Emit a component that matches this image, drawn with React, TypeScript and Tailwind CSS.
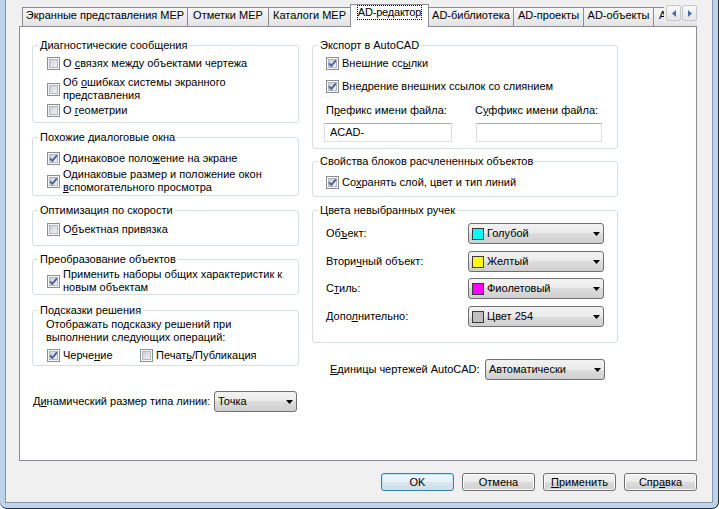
import React from 'react';

function U({ children }: { children: React.ReactNode }) {
  return <span className="underline underline-offset-[1px]">{children}</span>;
}

function CheckBox({ checked = false }: { checked?: boolean }) {
  return (
    <svg width="13" height="13" viewBox="0 0 13 13" className="shrink-0">
      <defs>
        <linearGradient id="cb-fill" x1="0" y1="0" x2="1" y2="1">
          <stop offset="0" stopColor="#c9cdd3" />
          <stop offset="1" stopColor="#f4f5f6" />
        </linearGradient>
      </defs>
      <rect x="0.5" y="0.5" width="12" height="12" fill="#f6f6f6" stroke="#8e8f8f" />
      <rect x="2.5" y="2.5" width="8" height="8" fill="url(#cb-fill)" stroke="#b3b8bf" />
      {checked && (
        <path d="M3.2 6.4 L5.3 9 L9.9 3.4" fill="none" stroke="#4a5f97" strokeWidth="1.9" strokeLinejoin="round" />
      )}
    </svg>
  );
}

function CheckRow({
  checked = false,
  className = '',
  children,
}: {
  checked?: boolean;
  className?: string;
  children: React.ReactNode;
}) {
  return (
    <div className={`flex items-center ${className}`}>
      <CheckBox checked={checked} />
      <span className="ml-[3px] whitespace-nowrap">{children}</span>
    </div>
  );
}

function Group({
  title,
  className = '',
  children,
}: {
  title: React.ReactNode;
  className?: string;
  children: React.ReactNode;
}) {
  return (
    <fieldset className={`rounded-[3px] border border-[#d5dfe5] ${className}`}>
      <legend className="ml-[5px] px-[2px] leading-[14px]">{title}</legend>
      {children}
    </fieldset>
  );
}

function Select({ className = '', children }: { className?: string; children: React.ReactNode }) {
  return (
    <div
      className={`flex h-[21px] items-center rounded-[3px] border border-[#707070] bg-[linear-gradient(#f2f2f2_0%,#ebebeb_50%,#dddddd_50%,#cfcfcf_100%)] pl-[3px] pr-[3px] ${className}`}
    >
      <div className="flex flex-1 items-center gap-[3px] whitespace-nowrap">{children}</div>
      <svg width="7" height="4" viewBox="0 0 7 4" className="shrink-0">
        <path d="M0 0H7L3.5 4Z" fill="#000" />
      </svg>
    </div>
  );
}

function Swatch({ color }: { color: string }) {
  return <span className={`h-[12px] w-[12px] shrink-0 border border-[#3a3a3a] ${color}`} />;
}

const tabs = [
  { label: 'Экранные представления MEP', w: 'w-[166px]' },
  { label: 'Отметки MEP', w: 'w-[82px]' },
  { label: 'Каталоги MEP', w: 'w-[83px]' },
  { label: 'AD-редактор', w: 'w-[79px]', active: true },
  { label: 'AD-библиотека', w: 'w-[86px]' },
  { label: 'AD-проекты', w: 'w-[71px]' },
  { label: 'AD-объекты', w: 'w-[71px]' },
  { label: 'AD-стили', w: 'w-[60px]' },
];

function Button({ primary = false, children }: { primary?: boolean; children: React.ReactNode }) {
  return (
    <div
      className={`flex h-[18px] w-[73px] items-center justify-center rounded-[3px] border ${
        primary
          ? 'border-[#3c7fb1] bg-[linear-gradient(#f1f6f9_0%,#e9f1f6_50%,#d9e6ee_50%,#cddde8_100%)] shadow-[inset_0_0_0_1px_#c4e5f6]'
          : 'border-[#707070] bg-[linear-gradient(#f2f2f2_0%,#ebebeb_50%,#dddddd_50%,#cfcfcf_100%)] shadow-[inset_0_0_0_1px_#fcfcfc]'
      }`}
    >
      {children}
    </div>
  );
}

export default function App() {
  return (
    <div className="h-[509px] w-[719px] overflow-hidden rounded-b-[7px] border-r border-b border-[#2e2e2e] bg-[#bdd4ec] px-[5px] pb-[5px] font-['Liberation_Sans',Arial,sans-serif] text-[11px] leading-[13px] text-black">
      <div className="flex h-full flex-col border-x border-b border-[#8797ab] bg-[#f0f0f0] pl-[13px] pr-[15px]">
        {/* tab strip */}
        <div className="relative z-10 flex h-[27px] items-end overflow-hidden pl-[3px]">
          {tabs.map((t, i) =>
            t.active ? (
              <div
                key={t.label}
                className={`-ml-px flex h-[23px] shrink-0 justify-center border border-b-0 border-[#898c95] bg-white ${t.w}`}
              >
                <span className="h-[15px] whitespace-nowrap border border-dotted border-black tracking-[-0.2px]">
                  {t.label}
                </span>
              </div>
            ) : (
              <div
                key={t.label}
                className={`${i === 0 ? '' : '-ml-px'} mb-px flex h-[19px] shrink-0 justify-center border border-b-0 border-[#898c95] bg-linear-to-b from-[#f8f8f8] to-[#e3e3e3] pt-px whitespace-nowrap ${t.w}`}
              >
                {t.label}
              </div>
            ),
          )}
          <div className="absolute top-[5px] right-0 flex gap-px bg-[#f0f0f0] pl-[2px]">
            <div className="flex h-[16px] w-[15px] items-center justify-center rounded-[2px] border border-[#c3c6cb] bg-linear-to-b from-[#fafafa] to-[#e6e6e6]">
              <svg width="4" height="7" viewBox="0 0 4 7">
                <path d="M4 0V7L0 3.5Z" fill="#4c6aa6" />
              </svg>
            </div>
            <div className="flex h-[16px] w-[15px] items-center justify-center rounded-[2px] border border-[#c3c6cb] bg-linear-to-b from-[#fafafa] to-[#e6e6e6]">
              <svg width="4" height="7" viewBox="0 0 4 7">
                <path d="M0 0V7L4 3.5Z" fill="#4c6aa6" />
              </svg>
            </div>
          </div>
        </div>

        {/* panel */}
        <div className="-mt-px flex h-[435px] gap-[13px] border border-[#898c95] bg-white pl-[12px]">
          {/* left column */}
          <div className="flex w-[267px] shrink-0 flex-col">
            <Group title="Диагностические сообщения" className="mt-[11px] h-[85px]">
              <div className="pl-[14px]">
                <CheckRow className="mt-[5px]">
                  О <U>с</U>вязях между объектами чертежа
                </CheckRow>
                <CheckRow className="mt-[6px]">
                  Об <U>о</U>шибках системы экранного
                  <br />
                  представления
                </CheckRow>
                <CheckRow className="mt-[2px]">
                  О <U>г</U>еометрии
                </CheckRow>
              </div>
            </Group>

            <Group title="Похожие диалоговые окна" className="mt-[7px] h-[66px]">
              <div className="pl-[14px]">
                <CheckRow checked className="mt-[8px]">
                  Одинаковое поло<U>ж</U>ение на экране
                </CheckRow>
                <CheckRow checked className="mt-[3px]">
                  Одинаковые размер и положение окон
                  <br />
                  <U>в</U>спомогательного просмотра
                </CheckRow>
              </div>
            </Group>

            <Group title="Оптимизация по скорости" className="mt-[7px] h-[43px]">
              <div className="pl-[14px]">
                <CheckRow className="mt-[6px]">
                  О<U>б</U>ъектная привязка
                </CheckRow>
              </div>
            </Group>

            <Group title="Преобразование объектов" className="mt-[6px] h-[43px]">
              <div className="pl-[14px]">
                <CheckRow checked className="mt-[2px]">
                  Применить наборы общих характеристик к
                  <br />
                  новым объектам
                </CheckRow>
              </div>
            </Group>

            <Group title="Подсказки решения" className="mt-[8px] h-[63px]">
              <div className="pl-[13px]">
                <div className="mt-px">
                  Отображать подсказку решений при
                  <br />
                  выполнении следующих операций:
                </div>
                <div className="mt-[5px] flex pl-px">
                  <CheckRow checked className="w-[93px]">
                    Черче<U>н</U>ие
                  </CheckRow>
                  <CheckRow>
                    Печат<U>ь</U>/Публикация
                  </CheckRow>
                </div>
              </div>
            </Group>

            <div className="mt-[25px] flex items-center pl-px">
              <span className="whitespace-nowrap">
                Д<U>и</U>намический размер типа линии:
              </span>
              <Select className="mr-[2px] ml-auto w-[83px]">Точка</Select>
            </div>
          </div>

          {/* right column */}
          <div className="flex w-[306px] shrink-0 flex-col">
            <Group title="Экспорт в AutoCAD" className="mt-[11px] h-[111px]">
              <div className="pl-[13px]">
                <CheckRow checked className="mt-[5px]">
                  Внешние сс<U>ы</U>лки
                </CheckRow>
                <CheckRow checked className="mt-[10px]">
                  Вне<U>д</U>рение внешних ссылок со слиянием
                </CheckRow>
              </div>
              <div className="mt-[11px] flex gap-[24px] pl-[11px]">
                <div className="w-[128px]">
                  <div className="pl-[2px] whitespace-nowrap">
                    П<U>р</U>ефикс имени файла:
                  </div>
                  <div className="mt-[6px] flex h-[19px] items-center border border-[#dbdfe6] border-t-[#abadb3] pl-[5px]">
                    ACAD-
                  </div>
                </div>
                <div className="w-[126px]">
                  <div className="-ml-px whitespace-nowrap">
                    С<U>у</U>ффикс имени файла:
                  </div>
                  <div className="mt-[6px] h-[19px] border border-[#dbdfe6] border-t-[#abadb3]" />
                </div>
              </div>
            </Group>

            <Group title="Свойства блоков расчлененных объектов" className="mt-[5px] h-[43px]">
              <div className="pl-[13px]">
                <CheckRow checked className="mt-[8px]">
                  Со<U>х</U>ранять слой, цвет и тип линий
                </CheckRow>
              </div>
            </Group>

            <Group title="Цвета невыбранных ручек" className="mt-[6px] h-[140px]">
              <div className="pl-[13px]">
                <div className="mt-[6px] flex items-center">
                  <span className="w-[142px]">
                    Об<U>ъ</U>ект:
                  </span>
                  <Select className="w-[136px]">
                    <Swatch color="bg-[#00ffff]" />
                    Голубой
                  </Select>
                </div>
                <div className="mt-[7px] flex items-center">
                  <span className="w-[142px]">
                    Втори<U>ч</U>ный объект:
                  </span>
                  <Select className="w-[136px]">
                    <Swatch color="bg-[#ffff00]" />
                    Желтый
                  </Select>
                </div>
                <div className="mt-[6px] flex items-center">
                  <span className="w-[142px]">
                    С<U>т</U>иль:
                  </span>
                  <Select className="w-[136px]">
                    <Swatch color="bg-[#ff00ff]" />
                    Фиолетовый
                  </Select>
                </div>
                <div className="mt-[7px] flex items-center">
                  <span className="w-[142px]">
                    Допо<U>л</U>нительно:
                  </span>
                  <Select className="w-[136px]">
                    <Swatch color="bg-[#bebebe]" />
                    Цвет 254
                  </Select>
                </div>
              </div>
            </Group>

            <div className="mt-[16px] flex items-center pl-[18px]">
              <span className="whitespace-nowrap">
                <U>Е</U>диницы чертежей AutoCAD:
              </span>
              <Select className="mr-[13px] ml-auto w-[120px]">Автоматически</Select>
            </div>
          </div>
        </div>

        {/* buttons */}
        <div className="mt-[12px] flex justify-end gap-[8px]">
          <Button primary>OK</Button>
          <Button>Отмена</Button>
          <Button>
            <U>П</U>рименить
          </Button>
          <Button>
            Спр<U>а</U>вка
          </Button>
        </div>
      </div>
    </div>
  );
}
